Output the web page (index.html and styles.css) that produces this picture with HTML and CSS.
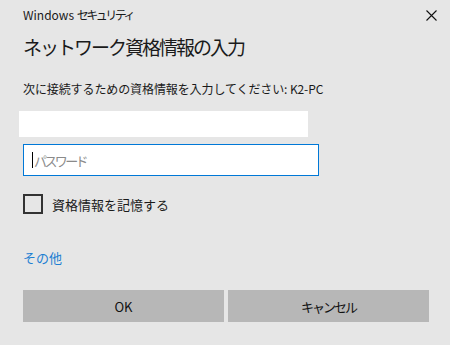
FILE: index.html
```html
<!DOCTYPE html>
<html lang="ja">
<head>
  <meta charset="UTF-8" />
  <title>Windows セキュリティ</title>
  <link rel="stylesheet" href="styles.css">
</head>
<body>
  <div class="dialog">
    <div class="topbar">
      <span class="app">Windows <span class="kana">セキュリティ</span></span>
      <svg class="close" width="11" height="11" viewBox="0 0 11 11">
        <path d="M0.5 0.5 L10.5 10.5 M10.5 0.5 L0.5 10.5" stroke="#111" stroke-width="1.1" fill="none"/>
      </svg>
    </div>
    <h1>ネットワーク資格情報の入力</h1>
    <p class="info">次に接続するための資格情報を入力してください: K2-PC</p>
    <div class="user"></div>
    <div class="pass">
      <span class="caret"></span>
      <span class="placeholder">パスワード</span>
    </div>
    <label class="remember">
      <span class="box"></span>
      <span>資格情報を記憶する</span>
    </label>
    <a class="more" href="#">その他</a>
    <div class="buttons">
      <button>OK</button>
      <button><span class="kana">キャンセル</span></button>
    </div>
  </div>
</body>
</html>
```

FILE: styles.css
```css
html, body {
  margin: 0;
  background: #e6e6e6;
}
body {
  font-family: "Noto Sans CJK JP", "Noto Sans", sans-serif;
  color: #1a1a1a;
  width: 450px;
  height: 345px;
  overflow: hidden;
}
.dialog {
  padding: 0 21px 0 23px;
  display: flex;
  flex-direction: column;
}
.topbar {
  display: flex;
  justify-content: space-between;
  align-items: center;
  height: 30px;
}
.app {
  font-size: 12px;
  margin-top: -2px;
}
.app .kana {
  letter-spacing: -2.5px;
}
.close {
  margin-right: -8px;
}
h1 {
  font-size: 19px;
  font-weight: normal;
  letter-spacing: -2px;
  margin: 2px 0 0;
  line-height: 30px;
}
.info {
  font-size: 12px;
  letter-spacing: -0.1px;
  margin: 17px 0 0;
  line-height: 20px;
}
.user {
  background: #fff;
  width: 289px;
  height: 26px;
  margin: 12px 0 0 -4px;
}
.pass {
  box-sizing: border-box;
  width: 296px;
  height: 32px;
  margin-top: 7px;
  border: 1px solid #0078d7;
  background: #fff;
  display: flex;
  align-items: center;
  padding-left: 8px;
}
.caret {
  width: 1px;
  height: 16px;
  background: #000;
}
.placeholder {
  font-size: 13px;
  letter-spacing: -2.6px;
  color: #8a8a8a;
  margin-left: 1px;
}
.remember {
  display: flex;
  align-items: center;
  margin-top: 18px;
  font-size: 13px;
}
.box {
  box-sizing: border-box;
  width: 20px;
  height: 20px;
  border: 2px solid #333;
  margin-right: 9px;
}
.more {
  color: #1e7fd2;
  text-decoration: none;
  font-size: 13px;
  margin-top: 35px;
  line-height: 18px;
}
.buttons {
  display: flex;
  gap: 4px;
  margin-top: 23px;
}
.buttons button {
  flex: 1;
  height: 32px;
  border: none;
  background: #b7b7b7;
  font-family: inherit;
  font-size: 13px;
  color: #111;
  padding: 0;
}
.buttons .kana {
  letter-spacing: -2px;
}
```
